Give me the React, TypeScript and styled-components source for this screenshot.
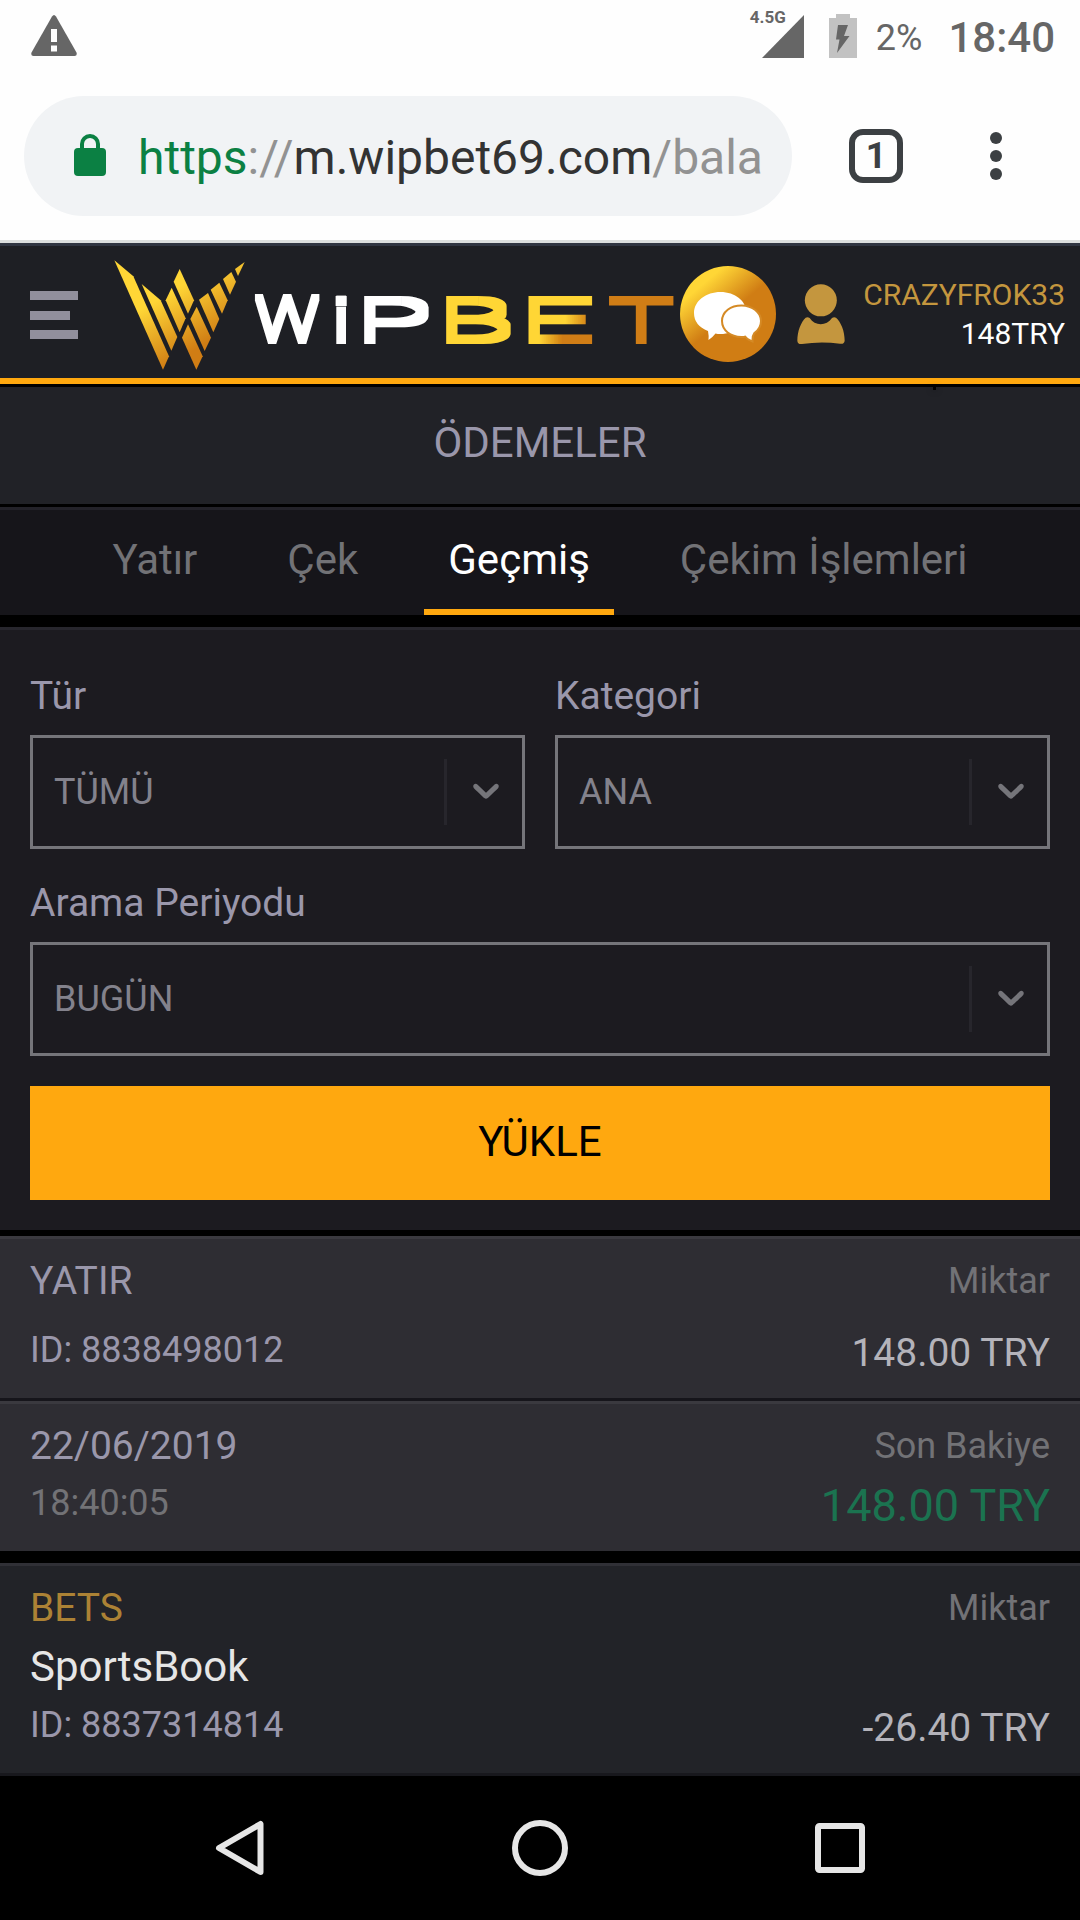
import React from "react";
import styled, { createGlobalStyle } from "styled-components";

const GlobalStyle = createGlobalStyle`
  *, *::before, *::after { box-sizing: border-box; }
  body { margin: 0; background: #000; font-family: Roboto, "Noto Sans", sans-serif; }
  svg { display: block; flex: none; }
`;

const Screen = styled.div`
  width: 1080px;
  height: 1920px;
  display: flex;
  flex-direction: column;
  overflow: hidden;
  background: #000;
`;

/* ---------- system status bar ---------- */

const StatusBar = styled.div`
  height: 72px;
  flex: none;
  display: flex;
  align-items: center;
  justify-content: space-between;
  padding: 0 25px 0 31px;
  background: #fefefe;
  color: #666;
`;

const StatusIcons = styled.div`
  display: flex;
  align-items: center;
  height: 72px;
`;

const Network = styled.div`
  display: flex;
  align-items: flex-start;
  height: 43px;
`;

const NetworkLabel = styled.span`
  font-size: 17px;
  font-weight: 700;
  line-height: 20px;
  margin: -8px -24px 0 0;
`;

const Percent = styled.span`
  font-size: 36px;
  line-height: 42px;
  margin: 3px 0 0 19px;
`;

const Clock = styled.span`
  font-size: 42px;
  font-weight: 500;
  line-height: 48px;
  margin: 3px 0 0 26px;
`;

/* ---------- browser toolbar ---------- */

const Toolbar = styled.div`
  height: 171px;
  flex: none;
  display: flex;
  align-items: center;
  padding-left: 24px;
  background: #fefefe;
  border-bottom: 3px solid #dcdedd;
`;

const AddressPill = styled.div`
  width: 768px;
  height: 120px;
  border-radius: 60px;
  background: #f1f3f5;
  display: flex;
  align-items: center;
  padding-left: 50px;
`;

const Url = styled.div`
  margin: 3px 0 0 32px;
  width: 632px;
  font-size: 48px;
  line-height: 60px;
  white-space: nowrap;
  overflow: hidden;
  color: #333;
`;

const UrlPart = styled.span<{ $tone: string }>`
  color: ${(p) => p.$tone};
`;

const TabCount = styled.div`
  width: 54px;
  height: 54px;
  margin-left: 57px;
  border: 6px solid #3c4043;
  border-radius: 14px;
  display: flex;
  align-items: center;
  justify-content: center;
  font-size: 36px;
  font-weight: 700;
  line-height: 42px;
  color: #3c4043;
`;

const Dots = styled.div`
  display: grid;
  gap: 6px;
  margin-left: 87px;
`;

const Dot = styled.i`
  width: 12px;
  height: 12px;
  border-radius: 50%;
  background: #3c4043;
`;

/* ---------- site header ---------- */

const SiteHeader = styled.header`
  position: relative;
  height: 144px;
  flex: none;
  display: flex;
  align-items: flex-start;
  background: #1e1f24;
  border-top: 3px solid #303541;
  border-bottom: 3px solid #000;
  box-shadow: inset 0 -6px 0 #ffa80f;
  padding: 0 15px 0 30px;
`;

const HeaderTick = styled.i`
  position: absolute;
  left: 933px;
  bottom: -6px;
  width: 3px;
  height: 3px;
  background: #000;
  box-shadow: 0 0 6px rgba(0, 0, 0, 0.5);
`;

const MenuButton = styled.div`
  width: 48px;
  margin-top: 45px;
  display: grid;
  row-gap: 10.5px;
`;

const MenuBar = styled.i<{ $w: number }>`
  width: ${(p) => p.$w}px;
  height: 9px;
  background: #918f9c;
`;

const LogoBox = styled.div`
  margin: 13px 0 0 35px;
`;

const ChatBox = styled.div`
  margin: 20px 0 0 5px;
`;

const UserBox = styled.div`
  margin: 38px 0 0 21px;
`;

const Account = styled.div`
  flex: 1;
  margin-top: 29px;
  text-align: right;
  font-size: 30px;
  line-height: 39px;
`;

const UserName = styled.div`
  color: #c4963e;
`;

const Balance = styled.div`
  color: #fff;
`;

/* ---------- page title and tabs ---------- */

const PageTitle = styled.h1`
  margin: 0;
  height: 120px;
  flex: none;
  padding-bottom: 6px;
  border-bottom: 3px solid #000;
  background: #212227;
  color: #9a97ab;
  font-size: 42px;
  font-weight: 400;
  line-height: 111px;
  text-align: center;
`;

const Tabs = styled.nav`
  height: 120px;
  flex: none;
  display: flex;
  justify-content: center;
  gap: 42px;
  background: #16151a;
  border-top: 3px solid #232229;
  border-bottom: 12px solid #000;
`;

const Tab = styled.div<{ $active?: boolean }>`
  height: 105px;
  padding: 0 24px;
  border-bottom: 6px solid ${(p) => (p.$active ? "#ffa80f" : "transparent")};
  color: ${(p) => (p.$active ? "#fff" : "#727276")};
  font-size: 42px;
  line-height: 99px;
`;

/* ---------- filter form ---------- */

const Filters = styled.section`
  height: 609px;
  flex: none;
  display: grid;
  grid-template-columns: 1fr 1fr;
  grid-template-rows: 176px 176px 114px;
  column-gap: 30px;
  row-gap: 31px;
  padding: 43px 30px 0;
  background: #1c1b20;
  border-top: 3px solid #27262d;
  border-bottom: 6px solid #000;
`;

const Field = styled.label<{ $wide?: boolean }>`
  grid-column: ${(p) => (p.$wide ? "1 / -1" : "auto")};
  display: block;
`;

const FieldLabel = styled.div`
  height: 46px;
  margin-bottom: 16px;
  color: #9a97ab;
  font-size: 39px;
  line-height: 46px;
`;

const SelectBox = styled.div`
  height: 114px;
  border: 3px solid #75757a;
  display: flex;
  align-items: center;
  padding-left: 21px;
`;

const SelectValue = styled.span`
  flex: 1;
  color: #83828c;
  font-size: 36px;
  line-height: 42px;
`;

const SelectArrow = styled.span`
  width: 78px;
  height: 66px;
  border-left: 3px solid #27262c;
  display: flex;
  align-items: center;
  justify-content: center;
  padding: 0 0 5px 2px;
`;

const LoadButton = styled.button`
  grid-column: 1 / -1;
  height: 114px;
  margin-top: -1px;
  border: 0;
  padding: 0 0 4px;
  background: #ffa80f;
  color: #000;
  font-family: inherit;
  font-size: 42px;
`;

/* ---------- history list ---------- */

const Row = styled.div<{ $h: number; $bg: string; $edge: string; $under: string; $gap: number }>`
  height: ${(p) => p.$h}px;
  flex: none;
  display: flex;
  justify-content: space-between;
  padding: 18px 30px 0;
  background: ${(p) => p.$bg};
  border-top: 3px solid ${(p) => p.$edge};
  border-bottom: ${(p) => p.$gap}px solid ${(p) => p.$under};
`;

const Column = styled.div<{ $right?: boolean }>`
  text-align: ${(p) => (p.$right ? "right" : "left")};
`;

const Line = styled.div<{ $size: number; $tone: string; $top?: number }>`
  margin-top: ${(p) => p.$top ?? 0}px;
  font-size: ${(p) => p.$size}px;
  line-height: 48px;
  color: ${(p) => p.$tone};
  white-space: nowrap;
`;

/* ---------- system navigation ---------- */

const NavBar = styled.div`
  height: 144px;
  flex: none;
  display: grid;
  grid-template-columns: repeat(3, 300px);
  justify-content: center;
  align-items: center;
  justify-items: center;
  background: #000;
`;

/* ---------- drawings ---------- */

const WarningSvg = styled.svg`
  margin-top: -2px;
`;

const BatterySvg = styled.svg`
  margin-left: 25px;
`;

const LockSvg = styled.svg`
  margin-top: -2px;
`;

const WarningIcon = () => (
  <WarningSvg width="46" height="41" viewBox="0 0 46 41">
    <path d="M21 1.6Q23-1.4 25 1.6L45.5 37.5Q46.5 41 43.5 41H2.5Q-.5 41 .5 37.5Z" fill="#666" />
    <path d="M20 14h6v13h-6zM20 30.5h6v6h-6z" fill="#fefefe" />
  </WarningSvg>
);

const BatteryIcon = () => (
  <BatterySvg width="28" height="44" viewBox="0 0 28 44">
    <path d="M7 0h14v4h7v40H0V4h7z" fill="#c2c2c2" />
    <path d="M9 11h10l-4 11h5.5L8 39l2.5-13.5H7z" fill="#666" />
  </BatterySvg>
);

const LockIcon = () => (
  <LockSvg width="32" height="42" viewBox="0 0 32 42">
    <rect x="0" y="14" width="32" height="28" rx="4" fill="#0b8043" />
    <path d="M8 16V10a8 8 0 0 1 16 0v6" fill="none" stroke="#0b8043" strokeWidth="4" />
  </LockSvg>
);

const Chevron = () => (
  <svg width="44" height="44" viewBox="0 0 20 20" fill="#75757a">
    <path d="M4.516 7.548c0.436-0.446 1.043-0.481 1.576 0l3.908 3.747 3.908-3.747c0.533-0.481 1.141-0.446 1.574 0 0.436 0.445 0.408 1.197 0 1.615-0.406 0.418-4.695 4.502-4.695 4.502-0.217 0.223-0.502 0.335-0.787 0.335s-0.570-0.112-0.789-0.335c0 0-4.287-4.084-4.695-4.502s-0.436-1.170 0-1.615z" />
  </svg>
);

const heavyLetters = [
  { ch: "i", x: 1004, sx: 1.1, fill: "#fff" },
  { ch: "P", x: 1068, sx: 2.22, fill: "#fff" },
  { ch: "B", x: 1314, sx: 2.22, fill: "#ffd636" },
  { ch: "E", x: 1560, sx: 2.28, fill: "url(#eGold)" },
  { ch: "T", x: 1831, sx: 1.84, fill: "#d07d14" },
];

const Logo = () => (
  <svg width="562" height="112" viewBox="339 72 1686 336">
    <defs>
      <linearGradient id="gold" gradientUnits="userSpaceOnUse" x1="480" y1="190" x2="575" y2="350">
        <stop offset="0" stopColor="#ffd636" />
        <stop offset="1" stopColor="#d07d14" />
      </linearGradient>
      <linearGradient
        id="eGold"
        gradientUnits="userSpaceOnUse"
        x1="1696"
        y1="244"
        x2="1722"
        y2="278"
        gradientTransform="scale(0.4386 1) translate(-1560 -314)"
      >
        <stop offset="0" stopColor="#ffd636" />
        <stop offset="1" stopColor="#d07d14" />
      </linearGradient>
      <filter id="medium" filterUnits="userSpaceOnUse" x="740" y="150" width="1290" height="200">
        <feMorphology operator="dilate" radius="9 8" />
      </filter>
      <filter id="heavy" filterUnits="userSpaceOnUse" x="740" y="150" width="1290" height="200">
        <feMorphology operator="dilate" radius="10.5 12" />
      </filter>
    </defs>
    <g fill="url(#gold)">
      <path d="M343 76L400 124L507 364L489 404Z" />
      <path d="M425 147L482 196L532 306L514 347Z" />
      <path d="M515 158L557 250L539 292L497 196Z" />
      <path d="M539 102L582 196L564 236L521 140Z" />
      <path d="M564 268L608 364L589 404L546 308Z" />
      <path d="M590 215L633 308L614 348L571 252Z" />
      <path d="M597 194L624 174L658 252L640 292Z" />
      <path d="M632 164L658 143L683 196L666 236Z" />
      <path d="M669 132L694 111L708 140L690 179Z" />
      <path d="M705 102L734 81L714 123Z" />
    </g>
    <g fontFamily="Roboto, sans-serif" fontWeight="100">
      <g filter="url(#medium)" fontSize="181">
        <text transform="translate(767 319) scale(1.15 1)" fill="#fff">W</text>
      </g>
      <g filter="url(#heavy)" fontSize="169">
        {heavyLetters.map((l) => (
          <text key={l.ch} transform={`translate(${l.x} 314) scale(${l.sx} 1)`} fill={l.fill}>
            {l.ch}
          </text>
        ))}
      </g>
    </g>
  </svg>
);

const ChatIcon = () => (
  <svg width="96" height="96" viewBox="0 0 96 96">
    <defs>
      <linearGradient id="coin" x1="0.14" y1="0.2" x2="0.5" y2="0.62">
        <stop offset="0.1" stopColor="#ffd636" />
        <stop offset="0.85" stopColor="#d07d14" />
      </linearGradient>
    </defs>
    <circle cx="48" cy="48" r="48" fill="url(#coin)" />
    <path
      d="M40.5 26C55 26 66.5 35 66.5 47S55 68 40.5 68Q37.5 68 35.5 67.5Q32 72 28.5 74Q29 70 28 65Q14 59.5 14 47C14 35 26 26 40.5 26Z"
      fill="#fff"
    />
    <path
      d="M61.5 40.5C72 40.5 80 47 80 55Q80 62 73.5 66.5Q71.5 69 71.5 74Q67.5 72.5 65.5 69.5Q63.5 70 61.5 70C51 70 43 63.5 43 55S51 40.5 61.5 40.5Z"
      fill="#fff"
      stroke="#d58a25"
      strokeWidth="4"
      paintOrder="stroke"
    />
  </svg>
);

const UserIcon = () => (
  <svg width="48" height="61" viewBox="382 149 144 183" fill="#c4963e">
    <circle cx="453.5" cy="198" r="48" />
    <path d="M408 250Q414 247 420 251C436 276 470 276 487 251Q493 247 499 250C514 263 525 290 525 319Q524 330 511 328Q453 320 397 329Q384 331 383 319C383 290 394 263 408 250Z" />
  </svg>
);

const BackIcon = () => (
  <svg width="50" height="56" viewBox="0 0 50 56">
    <path d="M4 28L45.5 4V52Z" fill="none" stroke="#e6e6e6" strokeWidth="6" strokeLinejoin="round" />
  </svg>
);

const HomeIcon = () => (
  <svg width="56" height="56" viewBox="0 0 56 56">
    <circle cx="28" cy="28" r="25" fill="none" stroke="#e6e6e6" strokeWidth="6" />
  </svg>
);

const RecentsIcon = () => (
  <svg width="50" height="50" viewBox="0 0 50 50">
    <rect x="3" y="3" width="44" height="44" rx="1.5" fill="none" stroke="#e6e6e6" strokeWidth="6" />
  </svg>
);

const Select = ({ label, value, wide }: { label: string; value: string; wide?: boolean }) => (
  <Field $wide={wide}>
    <FieldLabel>{label}</FieldLabel>
    <SelectBox>
      <SelectValue>{value}</SelectValue>
      <SelectArrow>
        <Chevron />
      </SelectArrow>
    </SelectBox>
  </Field>
);

const lilac = "#9a97ab";
const grey = "#727276";

export default function App() {
  return (
    <>
      <GlobalStyle />
      <Screen>
        <StatusBar>
          <WarningIcon />
          <StatusIcons>
            <Network>
              <NetworkLabel>4.5G</NetworkLabel>
              <svg width="42" height="43" viewBox="0 0 42 43">
                <path d="M42 0V43H0Z" fill="#666" />
              </svg>
            </Network>
            <BatteryIcon />
            <Percent>2%</Percent>
            <Clock>18:40</Clock>
          </StatusIcons>
        </StatusBar>
        <Toolbar>
          <AddressPill>
            <LockIcon />
            <Url>
              <UrlPart $tone="#0b8043">https</UrlPart>
              <UrlPart $tone="#929292">://</UrlPart>
              m.wipbet69.com
              <UrlPart $tone="#929292">/bala</UrlPart>
            </Url>
          </AddressPill>
          <TabCount>1</TabCount>
          <Dots>
            <Dot />
            <Dot />
            <Dot />
          </Dots>
        </Toolbar>
        <SiteHeader>
          <MenuButton>
            <MenuBar $w={48} />
            <MenuBar $w={40} />
            <MenuBar $w={48} />
          </MenuButton>
          <LogoBox>
            <Logo />
          </LogoBox>
          <ChatBox>
            <ChatIcon />
          </ChatBox>
          <UserBox>
            <UserIcon />
          </UserBox>
          <Account>
            <UserName>CRAZYFROK33</UserName>
            <Balance>148TRY</Balance>
          </Account>
          <HeaderTick />
        </SiteHeader>
        <PageTitle>ÖDEMELER</PageTitle>
        <Tabs>
          <Tab>Yatır</Tab>
          <Tab>Çek</Tab>
          <Tab $active>Geçmiş</Tab>
          <Tab>Çekim İşlemleri</Tab>
        </Tabs>
        <Filters>
          <Select label="Tür" value="TÜMÜ" />
          <Select label="Kategori" value="ANA" />
          <Select label="Arama Periyodu" value="BUGÜN" wide />
          <LoadButton>YÜKLE</LoadButton>
        </Filters>
        <Row $h={165} $bg="#2e2d33" $edge="#3a393f" $under="#16151b" $gap={3}>
          <Column>
            <Line $size={39} $tone={lilac}>YATIR</Line>
            <Line $size={36} $tone={lilac} $top={21}>ID: 8838498012</Line>
          </Column>
          <Column $right>
            <Line $size={36} $tone={grey}>Miktar</Line>
            <Line $size={39} $tone="#b4b3ba" $top={24}>148.00 TRY</Line>
          </Column>
        </Row>
        <Row $h={162} $bg="#2e2d33" $edge="#3a393f" $under="#000" $gap={12}>
          <Column>
            <Line $size={39} $tone={lilac}>22/06/2019</Line>
            <Line $size={36} $tone={grey} $top={9}>18:40:05</Line>
          </Column>
          <Column $right>
            <Line $size={36} $tone={grey}>Son Bakiye</Line>
            <Line $size={45} $tone="#1b7350" $top={12}>148.00 TRY</Line>
          </Column>
        </Row>
        <Row $h={213} $bg="#222328" $edge="#303036" $under="#18181d" $gap={3}>
          <Column>
            <Line $size={39} $tone="#ac8235">BETS</Line>
            <Line $size={42} $tone="#e6e6e6" $top={11}>SportsBook</Line>
            <Line $size={36} $tone={lilac} $top={10}>ID: 8837314814</Line>
          </Column>
          <Column $right>
            <Line $size={36} $tone={grey}>Miktar</Line>
            <Line $size={39} $tone="#b4b3ba" $top={72}>-26.40 TRY</Line>
          </Column>
        </Row>
        <NavBar>
          <BackIcon />
          <HomeIcon />
          <RecentsIcon />
        </NavBar>
      </Screen>
    </>
  );
}
